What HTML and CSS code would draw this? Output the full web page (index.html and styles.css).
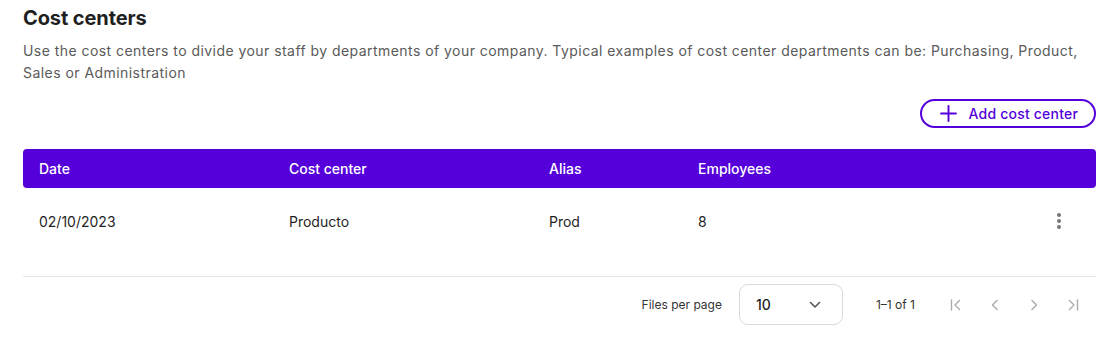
FILE: index.html
```html
<!DOCTYPE html>
<html lang="en">
<head>
    <meta charset="UTF-8">
    <meta name="viewport" content="width=device-width, initial-scale=1.0">
    <title>Cost centers</title>
    <link rel="stylesheet" href="styles.css">
</head>
<body>
<div class="page">
    <h1 class="page-title">Cost centers</h1>
    <p class="page-subtitle">Use the cost centers to divide your staff by departments of your company. Typical examples of cost center departments can be: Purchasing, Product, Sales or Administration</p>

    <div class="toolbar">
        <button class="button outline">
            <svg class="plus-icon" viewBox="0 0 16 16" fill="none" xmlns="http://www.w3.org/2000/svg">
                <path d="M8 1V15M1 8H15" stroke="currentColor" stroke-width="1.8" stroke-linecap="round"/>
            </svg>
            Add cost center
        </button>
    </div>

    <div class="table">
        <div class="table-row table-head">
            <div>Date</div>
            <div>Cost center</div>
            <div>Alias</div>
            <div>Employees</div>
            <div></div>
        </div>
        <div class="table-body">
            <div class="table-row">
                <div>02/10/2023</div>
                <div>Producto</div>
                <div>Prod</div>
                <div>8</div>
                <div class="row-menu"><span></span><span></span><span></span></div>
            </div>
        </div>
    </div>

    <div class="pagination">
        <span class="per-page-label">Files per page</span>
        <div class="select">
            <span>10</span>
            <svg class="chevron" viewBox="0 0 12 8" fill="none" xmlns="http://www.w3.org/2000/svg">
                <path d="M1.5 1.5L6 6L10.5 1.5" stroke="#555" stroke-width="1.6" stroke-linecap="round" stroke-linejoin="round"/>
            </svg>
        </div>
        <span class="page-range">1–1 of 1</span>
        <div class="page-nav">
            <svg viewBox="0 0 16 16" fill="none" xmlns="http://www.w3.org/2000/svg">
                <path d="M3.5 3V13M11.5 3.5L7 8L11.5 12.5" stroke="currentColor" stroke-width="1.4" stroke-linecap="round" stroke-linejoin="round"/>
            </svg>
            <svg viewBox="0 0 16 16" fill="none" xmlns="http://www.w3.org/2000/svg">
                <path d="M10 3.5L5.5 8L10 12.5" stroke="currentColor" stroke-width="1.4" stroke-linecap="round" stroke-linejoin="round"/>
            </svg>
            <svg viewBox="0 0 16 16" fill="none" xmlns="http://www.w3.org/2000/svg">
                <path d="M6 3.5L10.5 8L6 12.5" stroke="currentColor" stroke-width="1.4" stroke-linecap="round" stroke-linejoin="round"/>
            </svg>
            <svg viewBox="0 0 16 16" fill="none" xmlns="http://www.w3.org/2000/svg">
                <path d="M12.5 3V13M4.5 3.5L9 8L4.5 12.5" stroke="currentColor" stroke-width="1.4" stroke-linecap="round" stroke-linejoin="round"/>
            </svg>
        </div>
    </div>
</div>
</body>
</html>
```

FILE: styles.css
```css
:root {
    --primary-color: #5500DA;
    --text-color: #1F1F1F;
    --text-light: #5A5A5A;
    --border-color: #E6E6E6;
    --icon-muted: #AAAAAA;
}

* {
    box-sizing: border-box;
    margin: 0;
    padding: 0;
}

body {
    font-family: Inter, "Noto Sans", sans-serif;
    color: var(--text-color);
    background-color: #FFFFFF;
    -webkit-font-smoothing: antialiased;
}

.page {
    padding: 4px 18px 0 23px;
}

.page-title {
    font-size: 20px;
    font-weight: 700;
    line-height: 28px;
    letter-spacing: -0.1px;
}

.page-subtitle {
    margin-top: 8px;
    font-size: 14px;
    line-height: 22px;
    color: var(--text-light);
    letter-spacing: 0.45px;
}

.toolbar {
    display: flex;
    justify-content: flex-end;
    margin-top: 15px;
}

.button {
    display: inline-flex;
    align-items: center;
    gap: 12px;
    font-family: inherit;
    font-size: 14px;
    font-weight: 500;
    cursor: pointer;
    background: transparent;
}

.button.outline {
    height: 29px;
    padding: 0 16px 0 18px;
    border: 2px solid var(--primary-color);
    border-radius: 15px;
    color: var(--primary-color);
    letter-spacing: 0.2px;
}

.plus-icon {
    width: 17px;
    height: 17px;
}

.table {
    margin-top: 21px;
}

.table-row {
    display: grid;
    grid-template-columns: 250px 260px 149px 1fr 60px;
    align-items: center;
    padding-left: 16px;
    font-size: 14px;
}

.table-head {
    height: 39px;
    background-color: var(--primary-color);
    border-radius: 4px;
    color: #FFFFFF;
    font-weight: 500;
}

.table-body {
    padding-bottom: 22px;
    border-bottom: 1px solid var(--border-color);
}

.table-body .table-row {
    height: 66px;
}

.row-menu {
    display: flex;
    flex-direction: column;
    align-items: center;
    gap: 2px;
    padding-right: 14px;
}

.row-menu span {
    width: 4px;
    height: 4px;
    border-radius: 50%;
    background-color: #777777;
}

.pagination {
    display: flex;
    justify-content: flex-end;
    align-items: center;
    padding-top: 7px;
    padding-right: 15px;
    font-size: 12px;
}

.per-page-label {
    color: #333333;
}

.select {
    display: flex;
    align-items: center;
    justify-content: space-between;
    width: 104px;
    height: 41px;
    margin-left: 17px;
    padding: 0 21px 0 16px;
    border: 1px solid #DADADA;
    border-radius: 9px;
    font-size: 14px;
    font-weight: 500;
}

.chevron {
    width: 12px;
    height: 8px;
}

.page-range {
    margin-left: 33px;
    color: #333333;
}

.page-nav {
    display: flex;
    gap: 23px;
    margin-left: 33px;
    color: var(--icon-muted);
}

.page-nav svg {
    width: 16px;
    height: 16px;
}
```
